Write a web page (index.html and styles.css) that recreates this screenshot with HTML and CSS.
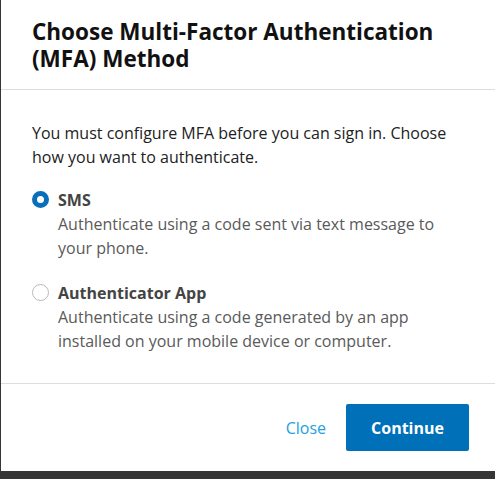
FILE: index.html
```html
<!DOCTYPE html>
<html lang="en">
<head>
<meta charset="utf-8">
<title>Choose MFA Method</title>
<link rel="stylesheet" href="styles.css">
</head>
<body>
<div class="modal">
  <div class="modal-header">
    <h1 class="modal-title">Choose Multi-Factor Authentication (MFA) Method</h1>
  </div>
  <div class="modal-body">
    <p class="intro">You must configure MFA before you can sign in. Choose how you want to authenticate.</p>
    <label class="option">
      <input class="radio" type="radio" name="mfa" checked>
      <span class="option-text">
        <span class="option-title">SMS</span>
        <span class="option-desc">Authenticate using a code sent via text message to your phone.</span>
      </span>
    </label>
    <label class="option">
      <input class="radio" type="radio" name="mfa">
      <span class="option-text">
        <span class="option-title">Authenticator App</span>
        <span class="option-desc">Authenticate using a code generated by an app installed on your mobile device or computer.</span>
      </span>
    </label>
  </div>
  <div class="modal-footer">
    <button class="btn-link" type="button">Close</button>
    <button class="btn-primary" type="button">Continue</button>
  </div>
</div>
</body>
</html>
```
FILE: styles.css
```css
html, body {
  margin: 0;
  padding: 0;
  height: 100%;
  overflow: hidden;
}
body {
  background: #363636;
  font-family: "Open Sans", "Noto Sans", sans-serif;
}
.modal {
  margin-left: 1px;
  width: 499px;
  background: #fff;
  display: flex;
  flex-direction: column;
}
.modal-header {
  padding: 18px 31px 17px;
  border-bottom: 1px solid #dedede;
}
.modal-title {
  margin: 0;
  font-size: 22.5px;
  line-height: 27px;
  font-weight: 700;
  color: #111;
}
.modal-body {
  padding: 31px 31px 30px;
  display: flex;
  flex-direction: column;
}
.intro {
  margin: 0 0 19px;
  font-size: 16px;
  line-height: 24px;
  color: #222;
}
.option {
  display: flex;
  align-items: flex-start;
  gap: 9px;
  margin-bottom: 21px;
  cursor: pointer;
}
.option:last-child {
  margin-bottom: 0;
}
.radio {
  appearance: none;
  -webkit-appearance: none;
  margin: 3px 0 0;
  width: 17px;
  height: 17px;
  border-radius: 50%;
  border: 1px solid #b9b9b9;
  background: #fff;
  flex: none;
  box-sizing: border-box;
}
.radio:checked {
  border: 5px solid #0a6fba;
}
.option-text {
  display: flex;
  flex-direction: column;
  font-size: 16px;
  line-height: 24px;
}
.option-title {
  font-weight: 700;
  color: #444;
}
.option-desc {
  color: #5a5a5a;
}
.modal-footer {
  border-top: 1px solid #dedede;
  padding: 20px 31px 20px;
  display: flex;
  justify-content: flex-end;
  align-items: center;
  gap: 20px;
}
.btn-link {
  background: none;
  border: none;
  padding: 0;
  font-family: inherit;
  font-size: 16px;
  color: #1ea0e1;
  cursor: pointer;
}
.btn-primary {
  width: 123px;
  height: 47px;
  background: #0070b9;
  color: #fff;
  border: none;
  border-radius: 2px;
  font-family: inherit;
  font-size: 16px;
  font-weight: 700;
  cursor: pointer;
}
```
